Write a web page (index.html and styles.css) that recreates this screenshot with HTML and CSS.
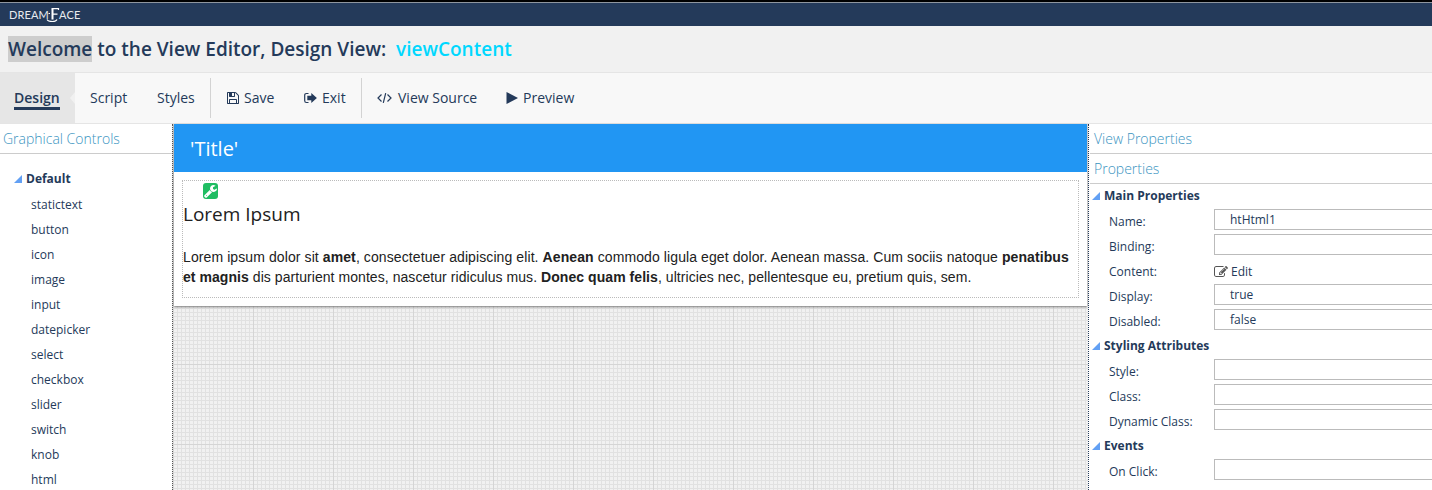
FILE: index.html
```html
<!DOCTYPE html>
<html lang="en">
<head>
<meta charset="utf-8">
<title>DreamFace View Editor</title>
<link rel="stylesheet" href="styles.css">
</head>
<body>
<header class="topbar">
  <div class="logo"><span class="logo-a">DREAM</span><svg class="logo-mark" viewBox="0 0 14 16"><path class="stem" d="M6.500 2V12.500"/><path d="M12.500 3V1.700H5.500M6 7.200H11.500M1 12.500Q2 14.500 6.500 14.500Q10 14.500 11 12.500"/><path d="M2.500 6.500H4"/></svg><span class="logo-b">ACE</span></div>
</header>
<div class="heading"><h1><span class="selected">Welcome</span> to the View Editor, Design View: <span class="view-name">viewContent</span></h1></div>
<nav class="toolbar">
  <a class="tab active"><span>Design</span></a>
  <a class="tab script">Script</a>
  <a class="tab styles">Styles</a>
  <i class="divider"></i>
  <a class="action save"><svg viewBox="0 0 1536 1792"><path d="M384 1536h768v-384H384v384zm896 0h128V640q0-14-10-38.500t-20-34.500l-281-281q-10-10-34-20t-39-10v416q0 40-28 68t-68 28H352q-40 0-68-28t-28-68V256H128v1280h128v-416q0-40 28-68t68-28h832q40 0 68 28t28 68v416zM896 608V288q0-13-9.500-22.500T864 256H672q-13 0-22.500 9.500T640 288v320q0 13 9.500 22.500T672 640h192q13 0 22.500-9.500T896 608zm640 32v928q0 40-28 68t-68 28H96q-40 0-68-28t-28-68V224q0-40 28-68t68-28h928q40 0 88 20t76 48l280 280q28 28 48 76t20 88z"/></svg>Save</a>
  <a class="action exit"><svg viewBox="0 0 13 12"><path class="line" d="M4.500 1.500H2.500Q.7 1.500.7 3.300V8.700Q.7 10.500 2.500 10.500H4.500"/><path d="M3.300 3.700H7.300V1L12.900 6L7.300 11V8.300H3.300Z"/></svg>Exit</a>
  <i class="divider"></i>
  <a class="action source"><svg viewBox="0 0 15 12"><path class="line" d="M4.500 2.500L1 6L4.500 9.500M10.500 2.500L14 6L10.500 9.500M8.700 1.200L6.300 10.800"/></svg>View Source</a>
  <a class="action preview"><svg viewBox="0 0 12 12"><path d="M.5 0L12 6L.5 12Z"/></svg>Preview</a>
</nav>
<main class="workspace">
  <aside class="controls">
    <h2 class="panel-title">Graphical Controls</h2>
    <h3 class="group"><i class="caret"></i>Default</h3>
    <ul>
      <li>statictext</li><li>button</li><li>icon</li><li>image</li><li>input</li><li>datepicker</li><li>select</li><li>checkbox</li><li>slider</li><li>switch</li><li>knob</li><li>html</li>
    </ul>
  </aside>
  <section class="canvas">
    <article class="card">
      <div class="card-title">'Title'</div>
      <div class="component">
        <span class="tool"><svg viewBox="0 0 1664 1792"><path d="M384 1472q0-26-19-45t-45-19-45 19-19 45 19 45 45 19 45-19 19-45zm644-420l-682 682q-37 37-90 37-52 0-91-37L59 1626q-38-36-38-90 0-53 38-91l681-681q39 98 114.500 173.500T1028 1052zm634-435q0 39-23 106-47 134-164.500 217.500T1216 1024q-185 0-316.500-131.500T768 576t131.500-316.500T1216 128q58 0 121.500 16.500T1445 191q16 11 16 28t-16 28l-293 169v224l193 107q5-3 79-48.500t135.500-81T1630 582q15 0 23.500 10t8.500 25z"/></svg></span>
        <h4>Lorem Ipsum</h4>
        <p><span class="line-one">Lorem ipsum dolor sit <b>amet</b>, consectetuer adipiscing elit. <b>Aenean</b> commodo ligula eget dolor. Aenean massa. Cum sociis natoque <b>penatibus</b></span><br><span class="line-two"><b>et magnis</b> dis parturient montes, nascetur ridiculus mus. <b>Donec quam felis</b>, ultricies nec, pellentesque eu, pretium quis, sem.</span></p>
      </div>
    </article>
  </section>
  <aside class="properties">
    <h2 class="panel-title">View Properties</h2>
    <h2 class="panel-title">Properties</h2>
    <h3 class="group"><i class="caret"></i>Main Properties</h3>
    <div class="row"><span>Name:</span><div class="field">htHtml1</div></div>
    <div class="row"><span>Binding:</span><div class="field"></div></div>
    <div class="row"><span>Content:</span><a class="edit"><svg viewBox="0 0 1792 1792"><path d="M888 1184l116-116-152-152-116 116v56h96v96h56zm440-720q-16-16-33 1L945 815q-17 17-1 33t33-1l350-350q17-17 1-33zm80 594v190q0 119-84.500 203.500T1120 1536H288q-119 0-203.500-84.500T0 1248V416q0-119 84.500-203.500T288 128h832q63 0 117 25 15 7 18 23 3 17-9 29l-49 49q-14 14-32 8-23-6-45-6H288q-66 0-113 47t-47 113v832q0 66 47 113t113 47h832q66 0 113-47t47-113v-126q0-13 9-22l64-64q15-15 35-7t20 29zm-96-738l288 288-672 672H640v-288zm444 132l-92 92-288-288 92-92q28-28 68-28t68 28l152 152q28 28 28 68t-28 68z"/></svg>Edit</a></div>
    <div class="row"><span>Display:</span><div class="field">true</div></div>
    <div class="row"><span>Disabled:</span><div class="field">false</div></div>
    <h3 class="group"><i class="caret"></i>Styling Attributes</h3>
    <div class="row"><span>Style:</span><div class="field"></div></div>
    <div class="row"><span>Class:</span><div class="field"></div></div>
    <div class="row"><span>Dynamic Class:</span><div class="field"></div></div>
    <h3 class="group"><i class="caret"></i>Events</h3>
    <div class="row"><span>On Click:</span><div class="field"></div></div>
  </aside>
</main>
</body>
</html>
```
FILE: styles.css
```css
* { box-sizing: border-box; }
body { margin: 0; height: 490px; overflow: hidden; display: flex; flex-direction: column; background: #fff; color: #243a5a; font-family: "Open Sans", sans-serif; }
h1, h2, h3, h4, p, ul { margin: 0; padding: 0; }
svg { display: block; flex: none; fill: currentColor; }

.topbar { height: 26px; flex: none; border-top: 2px solid #000; background: #243a5a; box-shadow: inset 0 1px #8f969f; }
.logo { display: flex; align-items: center; height: 26px; padding-left: 9px; color: #e8ebef; font: 11px/26px Lato, sans-serif; }
.logo-a { letter-spacing: .1px; width: 37px; }
.logo-mark { width: 14px; height: 16px; margin: -1px 0 0; fill: none; stroke: #fff; stroke-width: 1.2; }
.logo-mark .stem { stroke-width: 2; }
.logo-b { margin-left: -1px; letter-spacing: .2px; }

.heading { height: 46px; flex: none; padding: 10px 8px; background: #f1f1f1; }
h1 { font-size: 19px; line-height: 26px; font-weight: 600; white-space: nowrap; }
.selected { display: inline-block; background: #cdcdcd; }
.view-name { color: #00d8ff; margin-left: 5px; }

.toolbar { height: 52px; flex: none; display: flex; background: #f8f8f8; border: solid #e5e5e5; border-width: 1px 0; font-size: 14px; line-height: 50px; }
.tab, .action { display: flex; align-items: center; white-space: nowrap; }
.active { position: relative; width: 75px; padding-left: 14px; background: #e6e6e6; font-weight: 600; }
.active span { line-height: 24px; height: 24px; border-bottom: 3px solid #243a5a; }
.active::after { content: ""; position: absolute; right: 0; top: 19px; border: solid transparent; border-width: 6px 5px 6px 0; border-right-color: #f1f1f1; }
.script { width: 67px; padding-left: 15px; }
.styles { width: 68px; padding-left: 15px; }
.divider { width: 1px; height: 40px; margin-top: 5px; background: #d3d3d3; }
.line { fill: none; stroke: currentColor; stroke-width: 1.2; }
.save { width: 77px; padding-left: 16px; }
.save svg { width: 12px; height: 14px; margin-right: 5px; }
.exit { width: 73px; padding-left: 16px; }
.exit svg { width: 13px; height: 12px; margin-right: 5px; }
.source { width: 128px; padding-left: 15px; }
.source svg { width: 15px; height: 12px; margin-right: 6px; }
.preview { padding-left: 16px; }
.preview svg { width: 12px; height: 12px; margin-right: 5px; }

.workspace { flex: 1; min-height: 0; display: grid; grid-template-columns: 172px 916px 344px; }
.panel-title { height: 30px; padding-left: 3px; border-bottom: 1px solid #ccc; color: #3a94bf; font-size: 14px; line-height: 30px; font-weight: 300; }
.group { display: flex; align-items: center; height: 25px; font-size: 12px; font-weight: 700; }
.caret { width: 8px; height: 8px; margin-right: 4px; background: #62a0f4; clip-path: polygon(100% 0, 100% 100%, 0 100%); }
.controls .group { margin-top: 12px; padding-left: 14px; }
.controls .caret { margin-top: 1px; }
.controls ul { list-style: none; padding-left: 31px; font-size: 12px; line-height: 25px; padding-top: 1px; }

.canvas { border-left: 1px dotted #555; padding-left: 1px; background-color: #f1f1f1;
  background-image: linear-gradient(90deg, #d5d5d5 1px, transparent 1px), linear-gradient(#d5d5d5 1px, transparent 1px), linear-gradient(90deg, #e1e1e1 1px, transparent 1px), linear-gradient(#e1e1e1 1px, transparent 1px);
  background-size: 80px 80px, 80px 80px, 4px 4px, 4px 4px; }
.card { width: 913px; height: 182px; background: #fff; box-shadow: 0 1px 2px #777; }
.card-title { height: 48px; padding-left: 16px; background: #2196f3; color: #fff; font-size: 20px; line-height: 49px; }
.component { position: relative; width: 897px; height: 118px; margin: 8px; border: 1px dotted #bbb; color: #212121; }
.tool { position: absolute; left: 20px; top: 2px; width: 15px; height: 16px; padding: 1px; border-radius: 3px; background: #20bd62; color: #fff; }
.tool svg { width: 13px; height: 14px; }
h4 { padding-top: 20px; font-size: 19px; line-height: 26px; font-weight: 400; }
p { margin-top: 20px; font: 14px/20px "Liberation Sans", Arial, sans-serif; white-space: nowrap; }
.line-one { letter-spacing: .095px; }
.line-two { letter-spacing: .057px; }

.properties { border-left: 1px dotted #243a5a; overflow: hidden; }
.properties .panel-title { margin-left: 1px; padding-left: 4px; }
.properties .group { padding: 0 0 2px 3px; }
.properties .caret { margin-top: 1px; }
.row { display: grid; grid-template-columns: 105px 1fr; height: 25px; padding-left: 20px; font-size: 12px; }
.row > span { line-height: 25px; }
.field { height: 21px; margin-right: -2px; border: 1px solid #bbb; padding-left: 15px; line-height: 19px; }
.edit { display: flex; align-items: center; height: 25px; }
.edit svg { width: 14px; height: 14px; margin-right: 3px; color: #555; }
```
